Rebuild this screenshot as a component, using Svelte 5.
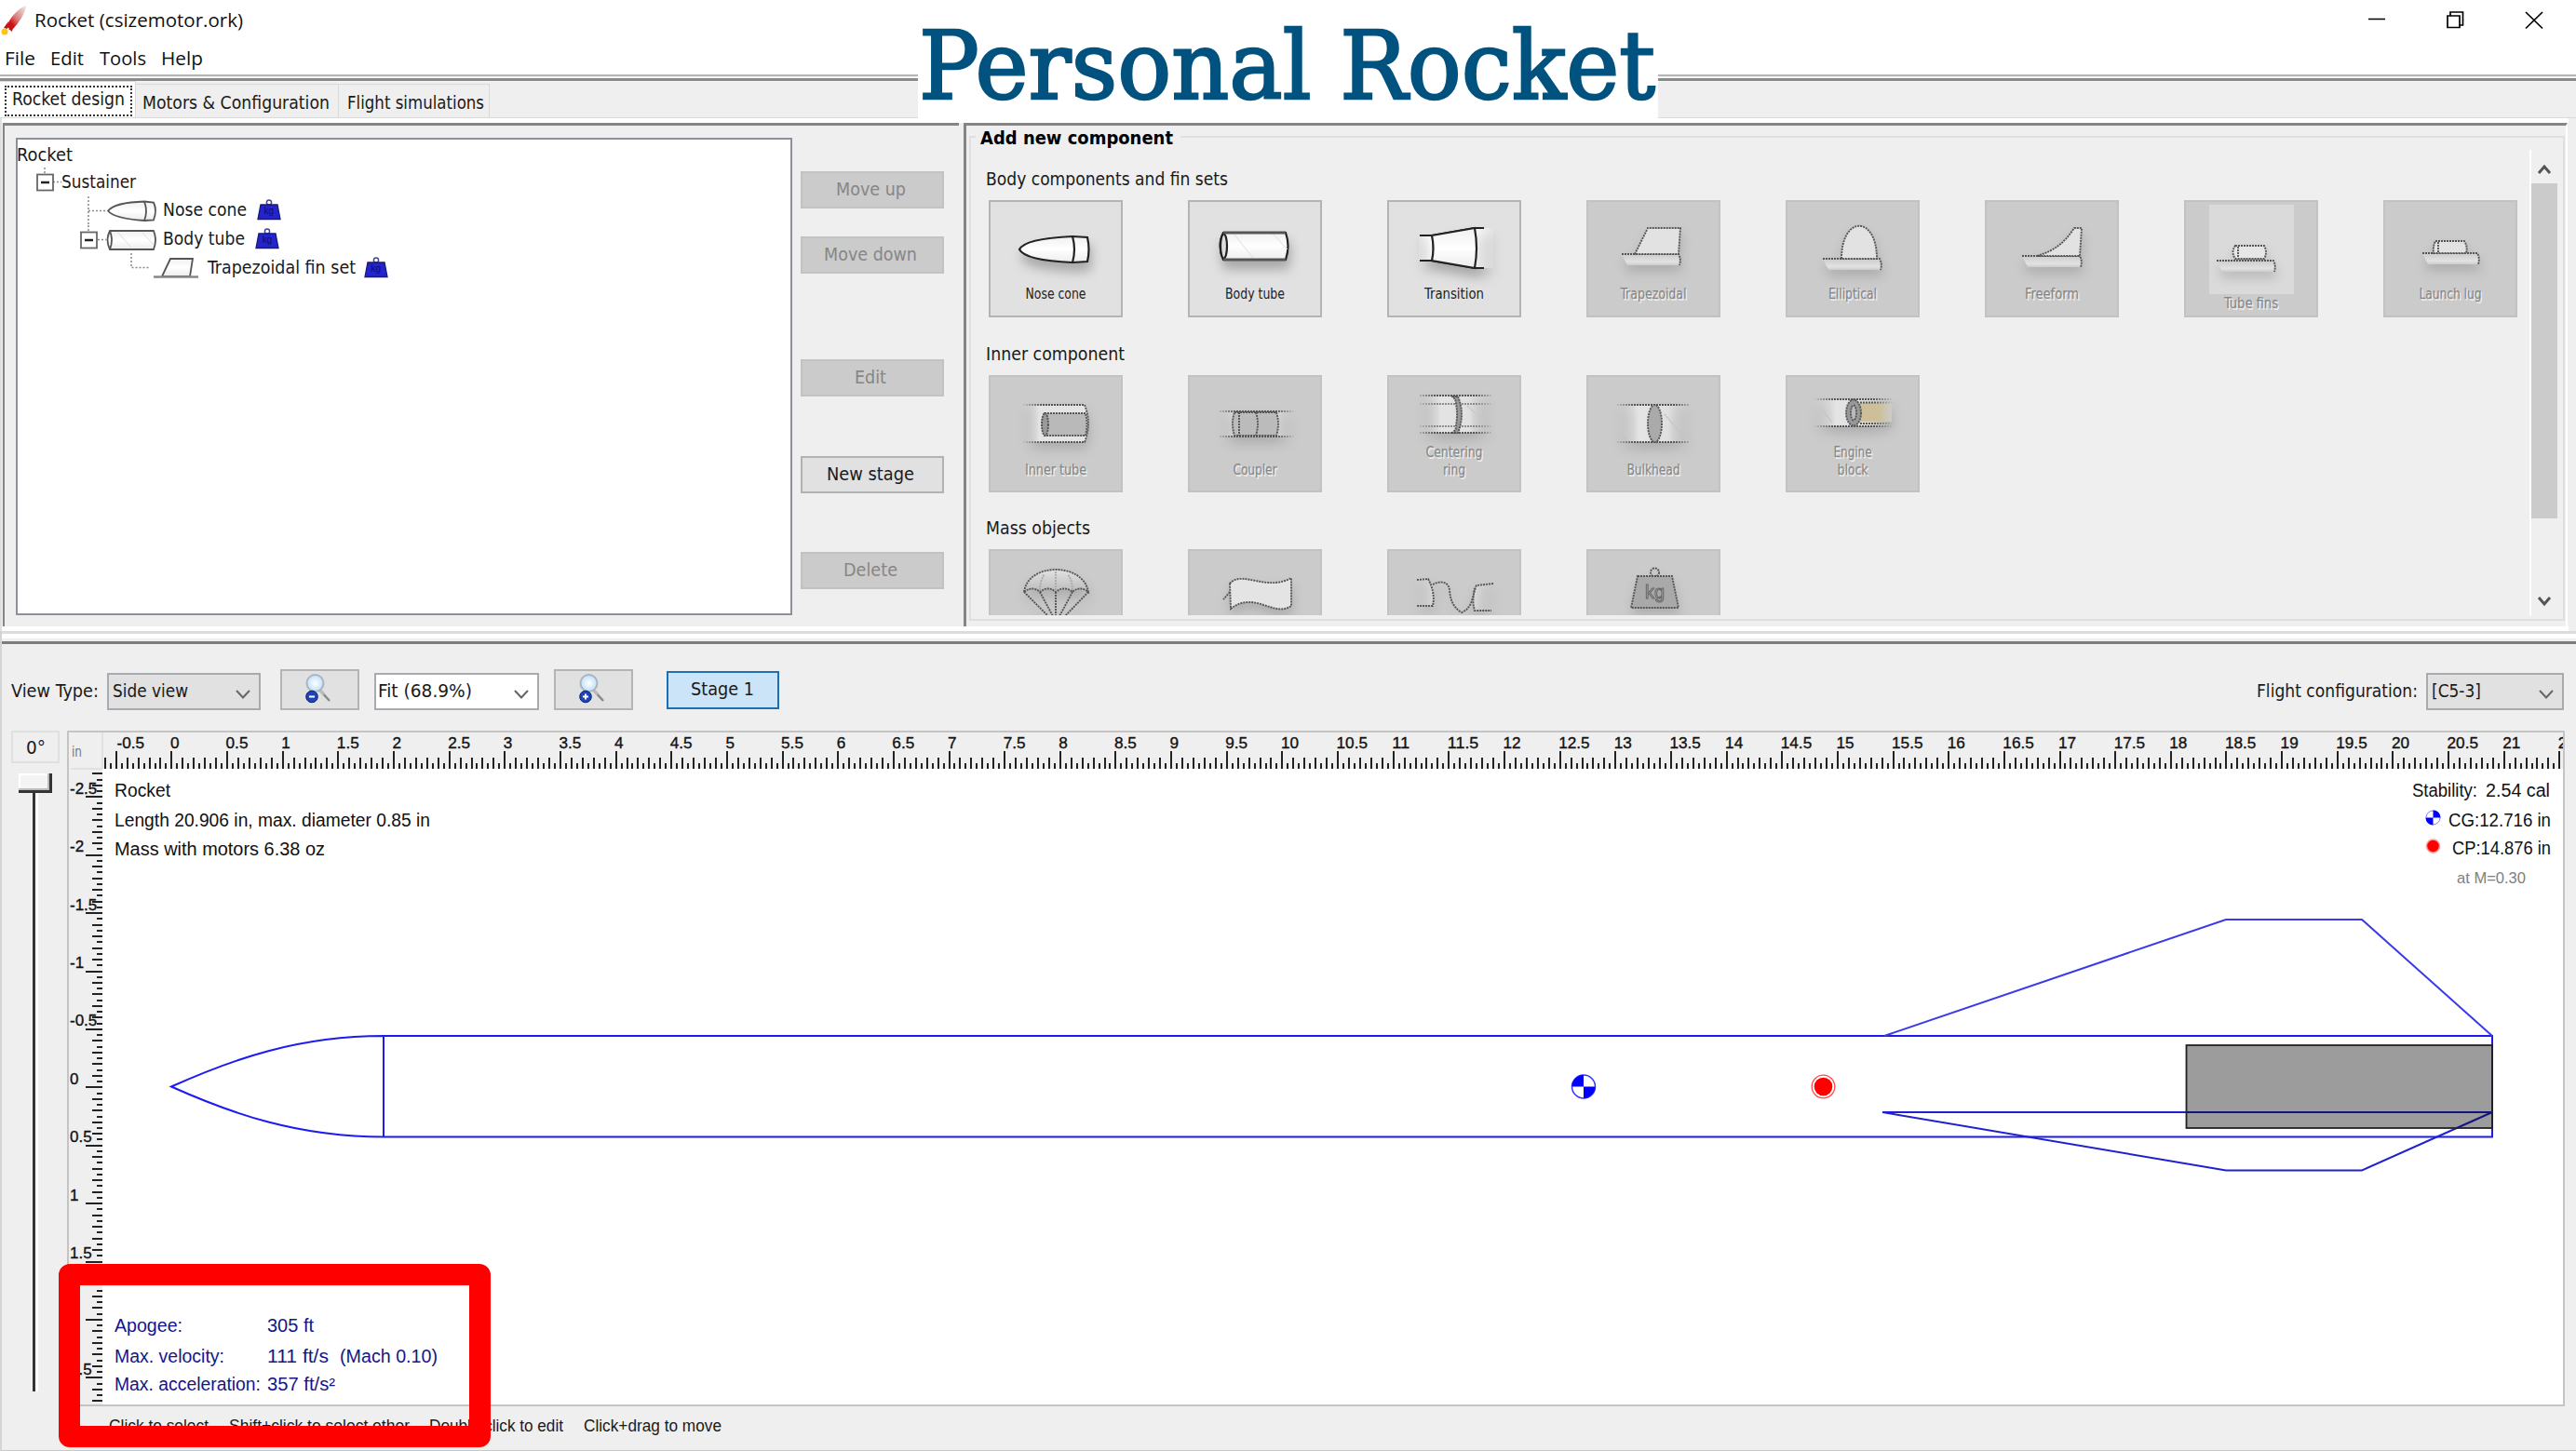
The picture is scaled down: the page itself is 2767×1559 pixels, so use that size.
<script>
  const menus = [['File', 33], ['Edit', 36], ['Tools', 50], ['Help', 45]];

  const shelves = [
    {
      title: 'Body components and fin sets', w: 260,
      items: [
        { id: 'nose', on: true, labels: [['Nose cone', 65, 106]] },
        { id: 'tube', on: true, labels: [['Body tube', 64, 106]] },
        { id: 'transition', on: true, labels: [['Transition', 64, 106]] },
        { id: 'trapezoid', labels: [['Trapezoidal', 71, 106]] },
        { id: 'ellipse', labels: [['Elliptical', 52, 106]] },
        { id: 'freeform', labels: [['Freeform', 58, 106]] },
        { id: 'tubefins', labels: [['Tube fins', 58, 116]] },
        { id: 'lug', labels: [['Launch lug', 67, 106]] }
      ]
    },
    {
      title: 'Inner component', w: 149,
      items: [
        { id: 'inner', labels: [['Inner tube', 66, 107]] },
        { id: 'coupler', labels: [['Coupler', 47, 107]] },
        { id: 'centering', labels: [['Centering', 61, 88], ['ring', 24, 107]] },
        { id: 'bulkhead', labels: [['Bulkhead', 57, 107]] },
        { id: 'engine', labels: [['Engine', 41, 88], ['block', 33, 107]] }
      ]
    },
    {
      title: 'Mass objects', w: 112,
      items: [
        { id: 'parachute', labels: [] },
        { id: 'streamer', labels: [] },
        { id: 'cord', labels: [] },
        { id: 'mass', labels: [] }
      ]
    }
  ];

  // Ruler geometry, in canvas pixels
  const X0 = 184.4, XU = 119.3, Y0 = 1168.3, YU = 124.8;
  const range = (a, b) => Array.from({ length: b - a + 1 }, (_, i) => a + i);
  const hTicks = range(-12, 430).map((i) => ({
    x: Math.round(X0 + (i / 20) * XU),
    y: i % 10 === 0 ? 807 : i % 2 === 0 ? 814 : 820
  }));
  const vTicks = range(-54, 54).map((i) => ({
    y: Math.round(Y0 + (i / 20) * YU),
    x: i % 10 === 0 ? 92 : i % 2 === 0 ? 99 : 104
  }));
  const hLabels = range(-1, 43).map((i) => ({ t: String(i / 2), x: i < 0 ? 125.5 : X0 - 1.5 + (i / 2) * XU }));
  const vLabels = range(-5, 5).map((i) => ({ t: String(i / 2), y: Y0 - 3.5 + (i / 2) * YU }));
  const wide = (t, u) => [...t].reduce((n, c) => n + (c === '-' ? 0.333 : c === '.' ? 0.278 : 0.556), 0) * u;

  const notes = [
    ['Rocket', 123, 855.5, 60], ['Length 20.906 in, max. diameter 0.85 in', 123, 888, 339],
    ['Mass with motors 6.38 oz', 123, 918.5, 226], ['Stability:', 2591, 855.5, 70],
    ['2.54 cal', 2670, 855.5, 69], ['CG:12.716 in', 2630, 888, 110], ['CP:14.876 in', 2634, 918, 106]
  ];
  const flight = [
    ['Apogee:', 123, 1431, 73], ['305 ft', 287, 1431, 50],
    ['Max. velocity:', 123, 1463.5, 118], ['111 ft/s', 287, 1463.5, 66], ['(Mach 0.10)', 365, 1463.5, 105],
    ['Max. acceleration:', 123, 1494, 157], ['357 ft/s²', 287, 1494, 73]
  ];
  const hints = [['Click to select', 107], ['Shift+click to select other', 194], ['Double click to edit', 144], ['Click+drag to move', 148]];
</script>

{#snippet label(t, w, cls = '')}
  <svg class="label {cls}" width={w} height="24"><text x="0" y="18" textLength={w} lengthAdjust="spacingAndGlyphs">{t}</text></svg>
{/snippet}

{#snippet kg()}
  <svg class="kg" width="26" height="24" viewBox="0 0 26 24">
    <circle cx="13" cy="3.500" r="2.600" fill="none" stroke="#44449a" stroke-width="1.500" />
    <path d="M4 6H22L25 21.500H1Z" fill="#2424cc" stroke="#18187a" stroke-width="1.300" />
    <text x="7.500" y="16" class="kgt">kg</text>
  </svg>
{/snippet}

{#snippet lens(sign)}
  <svg class="lens" width="85" height="44" viewBox="0 0 85 44">
    <path d="M42 22L53 34" stroke="#888" stroke-width="2.500" />
    <path d="M42 22L47 27" stroke="#bbb" stroke-width="3.500" />
    <circle cx="37.500" cy="15" r="9" fill="url(#glass)" stroke="#a9b4c4" stroke-width="2" />
    <circle cx="34" cy="29.500" r="6.300" fill="#1d45b8" stroke="#0b236f" />
    <path d={sign} stroke="#fff" stroke-width="2" />
  </svg>
{/snippet}

{#snippet chev()}
  <svg class="chev" width="18" height="12" viewBox="0 0 18 12"><path d="M2 2L9 9.500L16 2" fill="none" stroke="#666" stroke-width="2" /></svg>
{/snippet}

{#snippet base(x1, x2, y)}
  <path d="M{x1} {y}H{x2}l2 12H{x1 + 6}Z" fill="url(#fade)" stroke="none" />
  <path d="M{x1} {y}H{x2}q3 5 1 12" fill="none" />
{/snippet}

{#snippet glyph(id)}
  {#if id === 'nose'}
    <path d="M33 53C38 43 68 40 90 39L106 40Q109 53 106 66L90 67C68 66 38 63 33 53Z" fill="url(#body)" />
    <path d="M90 39Q94 53 90 67" fill="none" />
  {:else if id === 'tube'}
    <path d="M38 35H105Q110 49 105 64H38Q31 49 38 35Z" fill="url(#body)" />
    <path d="M49 36L70 62M91 36L107 53" stroke="#ddd" stroke-width="1" />
    <ellipse cx="38.500" cy="49.500" rx="3.500" ry="13" fill="#ddd" />
    <path d="M38 35H105M38 64H105" stroke="#555" stroke-width="3" />
  {:else if id === 'transition'}
    <path d="M34 38H48V65H34ZM94 30H114V73H94Z" fill="url(#flare)" stroke="none" />
    <path d="M35 38H48L94 30H104M35 65H48L94 73H104" fill="none" />
    <path d="M48 38L94 30Q98 52 94 73L48 65Q51 52 48 38Z" fill="url(#body)" />
  {:else if id === 'trapezoid'}
    {@render base(38, 99, 58)}<path d="M52 58L66 30H101L99 58Z" fill="#e2e2e2" />
  {:else if id === 'ellipse'}
    {@render base(40, 101, 63)}<path d="M60 63C60 16 98 16 98 63Z" fill="#e2e2e2" />
  {:else if id === 'freeform'}
    {@render base(40, 102, 60)}<path d="M56 60C76 54 86 45 96 30H104L102 60Z" fill="#e2e2e2" />
  {:else if id === 'tubefins'}
    {@render base(35, 96, 65)}<path d="M55 49H86Q90 56 86 63H55Q50 56 55 49Z" fill="#e6e6e6" /><path d="M58 50v12" />
  {:else if id === 'lug'}
    {@render base(42, 101, 57)}<path d="M56 44H87Q91 50 89 57H54Q53 50 56 44Z" fill="#e2e2e2" /><path d="M59 45v11" />
  {:else if id === 'inner'}
    <path d="M37 32H103Q111 52 103 72H37Z" fill="url(#open)" stroke="none" />
    <path d="M37 32H103Q111 52 103 72H37" fill="none" stroke="url(#inkOpen)" />
    <path d="M60 41H104Q107 53 104 65H60Q55 53 60 41Z" fill="#b9b9b9" /><ellipse cx="60.500" cy="53" rx="3.500" ry="12" fill="#999" />
  {:else if id === 'coupler'}
    <path d="M34 39H113V66H34Z" fill="url(#side)" stroke="none" />
    <path d="M34 39H113V39.100M34 66H113V66.100" fill="none" stroke="url(#ink)" /><path d="M50 40H95Q99 52 95 65H50Q46 52 50 40Z" fill="#bbb" /><path d="M73 40Q77 52 73 65M55 40v25" fill="none" />
  {:else if id === 'centering'}
    <path d="M35 22H111V62H35Z" fill="url(#side)" stroke="none" />
    <path d="M35 22H111V22.100M35 62H111V62.100" fill="none" stroke="url(#ink)" /><path d="M35 31H111V31.100M35 55H111V55.100" fill="none" stroke="url(#ink)" opacity=".6" />
    <path d="M86 33L104 50" stroke="#c8c8c8" />
    <path d="M70 23H76Q84 42 76 62H70Q75 58 74 54Q76 42 74 31Q74 26 70 23Z" fill="#999" />
  {:else if id === 'bulkhead'}
    <path d="M33 32H111V72H33Z" fill="url(#side)" stroke="none" />
    <path d="M33 32H111V32.100M33 72H111V72.100" fill="none" stroke="url(#ink)" /><path d="M84 42L106 68M37 62L44 71" stroke="#c4c4c4" /><ellipse cx="73.500" cy="52" rx="7.500" ry="20" fill="#aaa" />
  {:else if id === 'engine'}
    <path d="M28 26H115V55H28Z" fill="url(#side)" stroke="none" /><rect x="80" y="30" width="34" height="20" fill="url(#tan)" stroke="none" />
    <path d="M28 26H115V26.100M28 55H115V55.100M80 29.500H115M80 52H115" fill="none" stroke="url(#ink)" /><path d="M38 36L50 51" stroke="#c4c4c4" /><ellipse cx="73" cy="40.500" rx="8" ry="14" fill="#999" /><ellipse cx="73" cy="40.500" rx="3" ry="8" fill="#bbb" />
  {:else if id === 'parachute'}
    <path d="M38 46C42 14 102 14 107 46Q98 39 90 46Q81 39 72 46Q64 39 55 46Q47 39 38 46Z" fill="url(#dome)" />
    <path d="M38 46L66 74M107 46L80 74M55 46L70 74M90 46L75 74M72 46V74" fill="none" /><path d="M55 44Q55 34 60 27M90 44Q90 34 85 27M72 44V24" fill="none" stroke="#aaa" />
  {:else if id === 'streamer'}
    <path d="M45 37C58 22 84 46 111 31V61C92 74 72 44 46 64Z" fill="#e4e4e4" /><path d="M45 46L38 54" />
  {:else if id === 'cord'}
    <path d="M30 34L44 32Q52 45 49 61L30 61ZM115 37L96 39Q90 52 94 66L113 65Z" fill="url(#side)" stroke="none" />
    <path d="M32 33L44 32Q52 47 49 61H32M114 37L96 39Q90 52 94 66H112" fill="none" />
    <path d="M49 38C56 34 66 34 67 44C68 54 70 62 80 68C90 64 92 54 94 42" fill="none" />
  {:else if id === 'mass'}
    <circle cx="73.500" cy="25" r="4.500" fill="none" /><path d="M55 29H92L99 63H48Z" fill="#a9a9a9" />
    <text x="63" y="53" class="masst">kg</text>
  {/if}
{/snippet}

<div class="win">
  <svg class="defs" width="0" height="0">
    <defs>
      <linearGradient id="body" x1="0" y1="0" x2="0" y2="1"><stop offset="0" stop-color="#f0f0f0" /><stop offset=".5" stop-color="#fff" /><stop offset="1" stop-color="#ececec" /></linearGradient>
      <linearGradient id="fade" x1="0" y1="0" x2="0" y2="1"><stop offset="0" stop-color="#ccc" /><stop offset=".7" stop-color="#e2e2e2" /><stop offset="1" stop-color="#ccc" /></linearGradient>
      <linearGradient id="side"><stop offset="0" stop-color="#ccc" stop-opacity="0" /><stop offset=".3" stop-color="#e4e4e4" /><stop offset=".7" stop-color="#e0e0e0" /><stop offset="1" stop-color="#ccc" stop-opacity="0" /></linearGradient>
      <linearGradient id="open"><stop offset="0" stop-color="#ccc" stop-opacity="0" /><stop offset=".25" stop-color="#e4e4e4" /><stop offset="1" stop-color="#e4e4e4" /></linearGradient>
      <linearGradient id="flare"><stop offset="0" stop-color="#fff" stop-opacity=".1" /><stop offset=".2" stop-color="#fff" /><stop offset=".7" stop-color="#fff" /><stop offset="1" stop-color="#fff" stop-opacity=".1" /></linearGradient>
      <linearGradient id="tan"><stop offset="0" stop-color="#cdbf98" /><stop offset=".6" stop-color="#cdbf98" /><stop offset="1" stop-color="#ccc" /></linearGradient>
      <linearGradient id="ink" gradientUnits="userSpaceOnUse" x1="30" y1="0" x2="116" y2="0"><stop offset="0" stop-color="#555" stop-opacity="0" /><stop offset=".25" stop-color="#555" /><stop offset=".75" stop-color="#555" /><stop offset="1" stop-color="#555" stop-opacity="0" /></linearGradient>
      <linearGradient id="inkOpen" gradientUnits="userSpaceOnUse" x1="35" y1="0" x2="108" y2="0"><stop offset="0" stop-color="#555" stop-opacity="0" /><stop offset=".3" stop-color="#555" /></linearGradient>
      <linearGradient id="dome" x1="0" y1="0" x2="0" y2="1"><stop offset="0" stop-color="#e2e2e2" /><stop offset="1" stop-color="#bbb" /></linearGradient>
      <radialGradient id="glass"><stop offset="0" stop-color="#fff" /><stop offset="1" stop-color="#bfe0fa" /></radialGradient>
      <linearGradient id="hull" x1="1" y1="0" x2="0" y2="1"><stop offset="0" stop-color="#eee" /><stop offset=".5" stop-color="#d98080" /><stop offset=".75" stop-color="#d01010" /></linearGradient>
    </defs>
  </svg>

  <header class="titlebar">
    <svg class="logo" width="28" height="32" viewBox="0 0 28 32">
      <path d="M8 17L3 24L7 25Z M13 22L12 28L8 25Z" fill="#c01515" />
      <path d="M27 0C18 3 9 14 6 23L12 26C19 19 26 9 27 0Z" fill="url(#hull)" />
      <circle cx="4" cy="28" r="3.500" fill="#fcc419" />
    </svg>
    {@render label('Rocket (csizemotor.ork)', 224, 'segoe')}
    <svg class="controls" width="200" height="40" viewBox="2540 0 200 40">
      <path d="M2544 20.500H2562M2629 17H2642V29.500H2629ZM2632 17V13H2645.500V27H2642M2713 13L2731 30.500M2731 13L2713 30.500" fill="none" stroke="#000" stroke-width="1.700" />
    </svg>
  </header>
  <nav class="menubar">
    {#each menus as [m, w]}{@render label(m, w, 'segoe')}{/each}
  </nav>
  <div class="rule"></div>

  <div class="tabs">
    <div class="tab active"><div class="focus">{@render label('Rocket design', 121)}</div></div>
    <div class="tab t2">{@render label('Motors & Configuration', 201)}</div>
    <div class="tab t3">{@render label('Flight simulations', 147)}</div>
  </div>

  <main class="upper">
    <section class="left">
      <div class="tree">
        <div class="row root">{@render label('Rocket', 60)}</div>
        <div class="row">
          <svg width="46" height="31" viewBox="20 0 46 31">
            <path d="M48 0V7M57 15.500H66" class="dots" /><rect x="40" y="7.500" width="17" height="17" fill="#fff" stroke="#666" stroke-width="1.800" /><path d="M44 16H53" stroke="#222" stroke-width="2.500" />
          </svg>
          {@render label('Sustainer', 80)}
        </div>
        <div class="row">
          <svg width="155" height="31" viewBox="20 0 155 31">
            <path d="M95 0V31M95 15.500H113" class="dots" />
            <path d="M116 15.500C122 8 140 6 155 5.500L165 6.500Q169 15 165 25.500L155 26C140 25 122 23 116 15.500Z" fill="url(#body)" class="ink" /><path d="M155 5.500Q159 16 155 26" class="ink" fill="none" />
          </svg>
          {@render label('Nose cone', 90)}<div class="g11">{@render kg()}</div>
        </div>
        <div class="row">
          <svg width="155" height="31" viewBox="20 0 155 31">
            <path d="M95 0V6M105 15.500H114" class="dots" /><rect x="87" y="7.500" width="17" height="17" fill="#fff" stroke="#666" stroke-width="1.800" /><path d="M91 16H100" stroke="#222" stroke-width="2.500" />
            <path d="M118 6H165Q169 16 165 26H118Q113 16 118 6Z" fill="url(#body)" class="ink" /><path d="M118 6Q122 16 118 26" class="ink" fill="none" /><path d="M127 8L141 24M153 8L165 21" stroke="#ddd" />
          </svg>
          {@render label('Body tube', 88)}<div class="g11">{@render kg()}</div>
        </div>
        <div class="row">
          <svg width="203" height="31" viewBox="20 0 203 31">
            <path d="M141 0V15.500H160" class="dots" />
            <path d="M174 25L183 6H207L204 25Z" fill="url(#body)" class="ink" /><path d="M165 25.500H213" stroke="#888" stroke-width="2.500" />
          </svg>
          {@render label('Trapezoidal fin set', 159)}<div class="g10">{@render kg()}</div>
        </div>
      </div>
      <div class="actions">
        <button class="off a1">{@render label('Move up', 75)}</button>
        <button class="off a2">{@render label('Move down', 100)}</button>
        <button class="off a3">{@render label('Edit', 34)}</button>
        <button class="a4">{@render label('New stage', 94)}</button>
        <button class="off a5">{@render label('Delete', 58)}</button>
      </div>
    </section>

    <section class="right">
      <div class="group">
        <div class="legend">{@render label('Add new component', 207, 'bold')}</div>
        <div class="scroll">
          <div class="shelves">
            {#each shelves as s}
              <div class="shelf">
                {@render label(s.title, s.w)}
                <div class="cells">
                  {#each s.items as it}
                    <button class="cell" class:off={!it.on}>
                      <svg width="144" height="126" viewBox="0 0 144 126">
                        {#if it.id === 'tubefins'}<rect x="27" y="5" width="91" height="96" fill="#dadada" />{/if}
                        <g class="icon" class:dim={!it.on}>{@render glyph(it.id)}</g>
                        {#each it.labels as [t, w, y]}
                          {#if !it.on}<text class="cap shade" x={(144 - w) / 2 + 1.5} y={y + 1.5} textLength={w} lengthAdjust="spacingAndGlyphs" aria-hidden="true">{t}</text>{/if}
                          <text class="cap" x={(144 - w) / 2} {y} textLength={w} lengthAdjust="spacingAndGlyphs">{t}</text>
                        {/each}
                      </svg>
                    </button>
                  {/each}
                </div>
              </div>
            {/each}
          </div>
          <div class="bar">
            <svg width="28" height="36" viewBox="0 0 28 36"><path d="M8 25L14 18L20 25" fill="none" stroke="#555" stroke-width="3" /></svg>
            <div class="thumb"></div>
            <svg width="28" height="32" viewBox="0 0 28 32"><path d="M8 14L14 21L20 14" fill="none" stroke="#555" stroke-width="3" /></svg>
          </div>
        </div>
      </div>
    </section>
  </main>

  <section class="lower">
    <div class="toolbar">
      {@render label('View Type:', 94)}
      <div class="select s1">{@render label('Side view', 81)}{@render chev()}</div>
      <button class="zoom">{@render lens('M31 29.500H37')}</button>
      <div class="select s2">{@render label('Fit (68.9%)', 101)}{@render chev()}</div>
      <button class="zoom z2">{@render lens('M31 29.500H37M34 26.500V32.500')}</button>
      <button class="stage">{@render label('Stage 1', 68)}</button>
      <div class="grow"></div>
      {@render label('Flight configuration:', 173)}
      <div class="select s3">{@render label('[C5-3]', 53)}{@render chev()}</div>
    </div>

    <div class="view">
      <div class="rotate">
        <div class="deg">{@render label('0°', 21)}</div>
        <div class="knob"></div>
        <div class="track"></div>
      </div>
      <svg class="canvas" width="2683" height="726" viewBox="72 785 2683 726">
        <rect x="72" y="785" width="2683" height="726" fill="#efefef" />
        <rect x="110" y="826" width="2645" height="684" fill="#fff" />
        <path d="M110 787V826M76 826H110" stroke="#ddd" stroke-width="1.500" />
        <text class="cap unit" x="77" y="812.500" textLength="11" lengthAdjust="spacingAndGlyphs">in</text>
        <g stroke="#222" stroke-width="2">
          {#each hTicks as k}<path d="M{k.x} {k.y}V826" />{/each}
          {#each vTicks as k}<path d="M{k.x} {k.y}H110" />{/each}
        </g>
        <g class="num">
          {#each hLabels as l}<text x={l.x} y="804" textLength={wide(l.t, 17.2)} lengthAdjust="spacingAndGlyphs">{l.t}</text>{/each}
          {#each vLabels as l}<text x="75" y={l.y} textLength={wide(l.t, 17)} lengthAdjust="spacingAndGlyphs">{l.t}</text>{/each}
        </g>
        <g class="note">
          {#each notes as [t, x, y, w]}<text {x} {y} textLength={w} lengthAdjust="spacingAndGlyphs">{t}</text>{/each}
          <text class="mach" x="2639" y="949" textLength="74" lengthAdjust="spacingAndGlyphs">at M=0.30</text>
        </g>
        <g class="note flight">
          {#each flight as [t, x, y, w]}<text {x} {y} textLength={w} lengthAdjust="spacingAndGlyphs">{t}</text>{/each}
        </g>
        <g transform="translate(2613.5 878.5)"><circle r="7.500" fill="#fff" stroke="#7a7aff" /><path d="M0 0V-8A8 8 0 0 1 8 0ZM0 0V8A8 8 0 0 1 -8 0Z" fill="#00f" /></g>
        <circle cx="2613.500" cy="909" r="7" fill="#f00" stroke="#ff9a9a" stroke-width="1.500" />

        <g fill="none" stroke="#1c1cf0" stroke-width="2">
          <path d="M184 1167.500C250 1138 320 1113 412 1113H2677V1221.500H412C320 1221.500 250 1197 184 1167.500ZM412 1113V1221.500" />
          <path d="M2024 1113L2391 988H2537L2677 1113" stroke="#3a3ae8" />
          <path d="M2022 1195H2677L2537 1257.500H2391Z" stroke="#2020d0" />
        </g>
        <rect x="2348.500" y="1123" width="328.500" height="89" fill="#000" fill-opacity=".39" stroke="#222" stroke-width="1.800" />
        <g transform="translate(1701 1167.500)"><circle r="12.500" fill="#fff" stroke="#33f" stroke-width="1.500" /><path d="M0 0V-12.500A12.500 12.500 0 0 0 -12.500 0ZM0 0V12.500A12.500 12.500 0 0 0 12.500 0Z" fill="#00f" /></g>
        <circle cx="1958.500" cy="1167.500" r="12.300" fill="#fff" stroke="#ff4a4a" stroke-width="1.300" />
        <circle cx="1958.500" cy="1167.500" r="9.800" fill="#f00" />
        <path d="M73 1511V786H2754V1510H73" fill="none" stroke="#c4c4c4" stroke-width="2" />
      </svg>
    </div>

    <footer class="hints">
      {#each hints as [t, w]}{@render label(t, w, 'arial')}{/each}
    </footer>
  </section>

  <h1 class="headline">
    <svg width="795" height="132"><text x="1" y="106" textLength="791" lengthAdjust="spacingAndGlyphs">Personal Rocket</text></svg>
  </h1>
  <div class="callout"></div>
</div>

<style>
  :global(body) { margin: 0; background: #fff; }
  * { box-sizing: border-box; }
  svg { display: block; flex: none; }
  button { border: 0; padding: 0; margin: 0; background: none; display: flex; align-items: center; justify-content: center; }
  .win { position: relative; width: 2767px; height: 1559px; overflow: hidden; background: #efefef; display: flex; flex-direction: column; font-family: "DejaVu Sans Condensed", "DejaVu Sans", sans-serif; }
  .defs { position: absolute; }
  .label { overflow: visible; font: 19px "DejaVu Sans Condensed", "DejaVu Sans", sans-serif; font-stretch: condensed; fill: #1a1a1a; }
  .label.segoe { font: 20.5px "Open Sans", sans-serif; fill: #111; }
  .label.bold { font: bold 19px "DejaVu Sans Condensed", "DejaVu Sans", sans-serif; fill: #000; }
  .label.arial { font: 17.5px "Liberation Sans", Arial, sans-serif; }
  .off .label { fill: #868686; }

  .titlebar { height: 45px; background: #fff; display: flex; align-items: flex-start; padding-left: 1px; }
  .logo { margin: 6px 8px 0 0; }
  .titlebar .label { margin-top: 11px; }
  .controls { margin-left: auto; margin-right: 27px; }
  .menubar { height: 35px; background: #fff; display: flex; gap: 16.3px; padding: 7px 0 0 5px; }
  .rule { height: 8px; border-top: 2px solid #b4b4b4; background: linear-gradient(#f4f4f4 1px, #fff 1px 2px, #8b8b8b 2px 5px, #f7f7f7 5px); }

  .tabs { height: 39px; display: flex; align-items: flex-end; border-bottom: 1px solid #dadada; }
  .tab { height: 36px; border: 1.5px solid #dadada; border-bottom: 0; border-left: 0; padding-top: 8px; }
  .active { width: 146px; height: 39px; background: #fff; padding: 4px 0 0 5px; }
  .focus { width: 137px; height: 33px; border: 2px dotted #333; padding: 1px 0 0 6px; }
  .t2 { width: 218px; padding-left: 7px; }
  .t3 { width: 162px; padding-left: 9px; }

  .upper { height: 551px; display: flex; background: linear-gradient(#fff 5px, transparent 5px 546px, #fff 546px); border-left: 2px solid #e0e0e0; border-right: 8px solid #efefef; padding: 5px 0 5px 1px; flex: none; }
  .left { width: 1027px; border-top: 3px solid #858585; border-left: 2px solid #858585; display: flex; }
  .tree { width: 834px; height: 513px; margin: 13px 0 0 12px; border: 2px solid #8c909c; background: #fff; }
  .row { height: 30.6px; display: flex; align-items: center; padding-left: 1px; }
  .row .label { margin-top: 0; }
  .root .label { margin: 3px 0 0 -2px; }
  .dots { fill: none; stroke: #888; stroke-width: 1.5; stroke-dasharray: 2 2; }
  .ink { stroke: #555; stroke-width: 1.8; }
  .g11 { padding-left: 11px; }
  .g10 { padding-left: 9px; }
  .kgt { font: 10px "Liberation Sans", sans-serif; fill: #0c0c70; }
  .actions { width: 153px; margin: 49px 0 0 9px; }
  .actions button { width: 154px; height: 40px; background: #e1e1e1; border: 2px solid #b2b2b2; padding-right: 4px; }
  .actions .off { background: #cbcbcb; border: 2px solid #c2c2c2; }
  .actions .a2 { margin-top: 30px; }
  .actions .a3 { margin-top: 92px; }
  .actions .a4 { margin-top: 64px; }
  .actions .a5 { margin-top: 63px; }

  .right { width: 1723px; margin-left: 5px; border-left: 3px solid #858585; border-top: 3px solid #858585; padding: 11px 0 0 3px; border-right: 2px solid #fff; }
  .group { width: 1714px; height: 521px; border: 2px solid #dfdfdf; }
  .legend { width: 220px; margin: -11px 0 0 5px; padding-left: 5px; background: #efefef; height: 24px; }
  .scroll { display: flex; height: 500px; overflow: hidden; }
  .shelves { width: 1676px; padding: 20px 0 0 19px; border-right: 2px solid #fff; height: 500px; overflow: hidden; }
  .shelf { height: 187.700px; padding-left: 0; }
  .shelf .label { margin-left: -3px; }
  .cells { display: flex; gap: 70px; margin-top: 10px; }
  .cell { width: 144px; height: 126px; background: #e1e1e1; box-shadow: inset 0 0 0 2px #b4b4b4; flex: none; }
  .cell.off { background: #cbcbcb; box-shadow: inset 0 0 0 2px #c2c2c2; }
  .icon { stroke: #222; stroke-width: 2.2; filter: drop-shadow(2px 9px 6px rgba(0, 0, 0, .25)); }
  .icon.dim { stroke: #555; stroke-width: 1.9; stroke-dasharray: 2 1; filter: drop-shadow(1px 7px 6px rgba(0, 0, 0, .14)); }
  .cap { font: 15px "DejaVu Sans Condensed", "DejaVu Sans", sans-serif; font-stretch: condensed; fill: #222; }
  .off .cap { fill: #858585; }
  .off .cap.shade { fill: #eee; }
  .masst { font: 20px "Liberation Sans", sans-serif; fill: none; stroke: #666; stroke-width: 1; stroke-dasharray: none; }
  .bar { width: 28px; height: 499px; display: flex; flex-direction: column; }
  .thumb { height: 360px; margin-bottom: auto; background: #cbcbcb; }

  .lower { flex: 1; display: flex; flex-direction: column; border-left: 2px solid #d4d4d4; background: linear-gradient(#dcdcdc 3px, #fff 3px 8px, #efefef 8px 11px, #7c7c7c 11px 14px, #efefef 14px); padding-top: 41px; }
  .toolbar { height: 44px; display: flex; align-items: center; padding: 0 13px 0 10px; }
  .toolbar > .label { margin-top: 4px; }
  .select { height: 40px; border: 2px solid #a9a9b0; background: #e1e1e1; display: flex; align-items: center; justify-content: space-between; padding: 0 8px 0 4px; margin-top: 3px; }
  .select .label { margin-top: 0; }
  .chev { margin-top: 7px; }
  .s1 { width: 165px; margin-left: 9px; margin-right: 21px; }
  .s2 { width: 177px; margin-left: 16px; margin-right: 16px; background: #fff; padding-left: 2px; }
  .s3 { width: 148px; margin-left: 9px; }
  .zoom { width: 85px; height: 44px; background: #e1e1e1; box-shadow: inset 0 0 0 2px #b4b4b4; }
  .stage { width: 121px; height: 41px; margin: 1px 0 0 36px; background: #cce4f7; border: 2.500px solid #1a6fb5; }
  .stage .label { margin: -1px 2px 0 0; }
  .grow { flex: 1; }

  .view { height: 726px; margin-top: 22px; display: flex; }
  .rotate { width: 70px; display: flex; flex-direction: column; align-items: flex-start; }
  .deg { width: 52px; height: 35px; margin-left: 10px; border: 2px solid #e0e0e0; padding: 5px 0 0 14px; }
  .knob { width: 36px; height: 21px; margin: 11px 0 0 18px; background: #f4f4f4; border-right: 3px solid #333; border-bottom: 3px solid #333; box-shadow: inset -2px -2px 0 #bbb, inset 2px 2px 0 #fff; }
  .track { width: 6px; height: 643px; margin-left: 33px; background: linear-gradient(90deg, #333 3px, #fff 3px); }
  .num { font: 17px "Liberation Sans", Arial, sans-serif; fill: #111; stroke: #111; stroke-width: .35px; }
  .note { font: 19.500px "Liberation Sans", Arial, sans-serif; fill: #111; }
  .flight { fill: #15158c; }
  .mach { font-size: 17px; fill: #808080; }
  .unit { fill: #777; font-size: 16px; }
  .hints { flex: 1; display: flex; gap: 21.500px; padding: 9px 0 0 115px; border-bottom: 1.500px solid #c8c8c8; }

  .headline { position: absolute; left: 986px; top: 0; width: 795px; height: 132px; margin: 0; background: #fff; }
  .headline svg { overflow: visible; }
  .headline text { font: 101px "DejaVu Serif", serif; fill: #01527f; stroke: #01527f; stroke-width: 2.5px; }
  .callout { position: absolute; left: 63px; top: 1358px; width: 464px; height: 197px; border: 23px solid #f00; border-radius: 12px; }
</style>
